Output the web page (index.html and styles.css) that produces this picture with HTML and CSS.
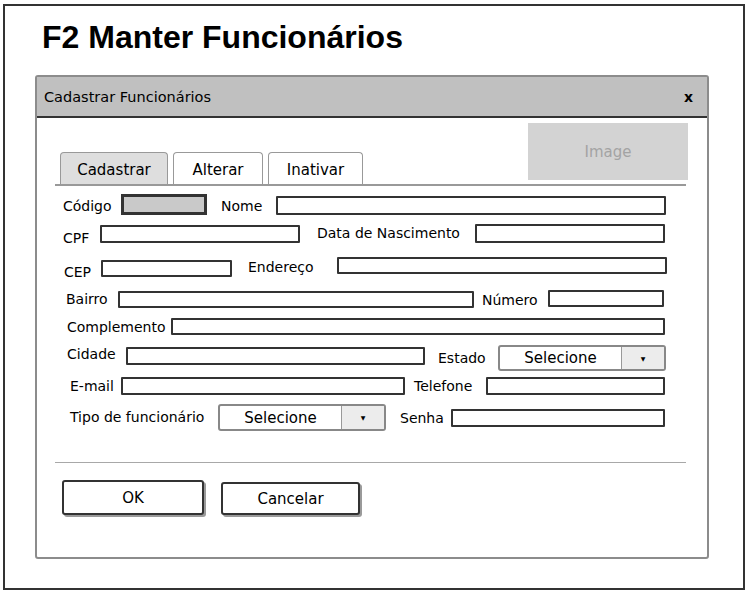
FILE: index.html
```html
<!DOCTYPE html>
<html lang="pt">
<head>
<meta charset="utf-8">
<title>F2 Manter Funcionários</title>
<link rel="stylesheet" href="styles.css">
</head>
<body>
<div class="frame">
  <h1 class="title">F2 Manter Funcionários</h1>
  <div class="dialog">
    <div class="dlg-head">
      <span class="dlg-title">Cadastrar Funcionários</span>
      <span class="dlg-close">x</span>
    </div>
    <div class="top">
      <div class="image">Image</div>
      <div class="tabs">
        <div class="tab tab-cad active">Cadastrar</div>
        <div class="tab tab-alt">Alterar</div>
        <div class="tab tab-ina">Inativar</div>
      </div>
    </div>
    <div class="form">
      <div class="row r1">
        <span class="lbl l-codigo">Código</span>
        <span class="codigo"></span>
        <span class="lbl l-nome">Nome</span>
        <span class="inp i-nome"></span>
      </div>
      <div class="row r2">
        <span class="lbl l-cpf">CPF</span>
        <span class="inp i-cpf"></span>
        <span class="lbl l-nasc">Data de Nascimento</span>
        <span class="inp i-nasc"></span>
      </div>
      <div class="row r3">
        <span class="lbl l-cep">CEP</span>
        <span class="inp i-cep"></span>
        <span class="lbl l-end">Endereço</span>
        <span class="inp i-end"></span>
      </div>
      <div class="row r4">
        <span class="lbl l-bairro">Bairro</span>
        <span class="inp i-bairro"></span>
        <span class="lbl l-num">Número</span>
        <span class="inp i-num"></span>
      </div>
      <div class="row r5">
        <span class="lbl l-comp">Complemento</span>
        <span class="inp i-comp"></span>
      </div>
      <div class="row r6">
        <span class="lbl l-cidade">Cidade</span>
        <span class="inp i-cidade"></span>
        <span class="lbl l-estado">Estado</span>
        <span class="sel sel-estado"><span class="sel-text">Selecione</span><span class="sel-arrow">▼</span></span>
      </div>
      <div class="row r7">
        <span class="lbl l-email">E-mail</span>
        <span class="inp i-email"></span>
        <span class="lbl l-tel">Telefone</span>
        <span class="inp i-tel"></span>
      </div>
      <div class="row r8">
        <span class="lbl l-tipo">Tipo de funcionário</span>
        <span class="sel sel-tipo"><span class="sel-text">Selecione</span><span class="sel-arrow">▼</span></span>
        <span class="lbl l-senha">Senha</span>
        <span class="inp i-senha"></span>
      </div>
    </div>
    <div class="sep"></div>
    <div class="buttons">
      <div class="btn btn-ok">OK</div>
      <div class="btn btn-cancel">Cancelar</div>
    </div>
  </div>
</div>
</body>
</html>
```
FILE: styles.css
```css
* { box-sizing: border-box; }
body {
  margin: 0;
  background: #fff;
  color: #000;
  font-family: "DejaVu Sans", "Liberation Sans", sans-serif;
  font-size: 14px;
}
.frame {
  margin: 4px 0 0 3px;
  width: 742px;
  height: 586px;
  border: 2px solid #333;
}
.title {
  margin: 11px 0 0 37px;
  height: 40px;
  font: bold 32px/40px "Liberation Sans", sans-serif;
  color: #000;
}
.dialog {
  margin: 18px 0 0 30px;
  width: 674px;
  height: 484px;
  border: 2px solid #8c8c8c;
  border-radius: 3px;
}
.dlg-head {
  height: 41px;
  background: #c0c0c0;
  border-bottom: 2px solid #333;
  display: flex;
  align-items: center;
  justify-content: space-between;
  padding: 0 14px 0 7px;
  font-size: 14.5px;
}
.dlg-close {
  font-weight: bold;
  font-size: 14px;
}
.top {
  display: grid;
  height: 68px;
  padding: 5px 21px 0 18px;
}
.image, .tabs { grid-area: 1 / 1; }
.image {
  justify-self: end;
  align-self: start;
  margin-right: -2px;
  width: 160px;
  height: 57px;
  background: #d3d3d3;
  color: #a3a3a3;
  font-size: 15px;
  display: flex;
  align-items: center;
  justify-content: center;
}
.tabs {
  align-self: end;
  display: flex;
  gap: 5px;
  padding-left: 5px;
  border-bottom: 2px solid #999;
}
.tab {
  height: 32px;
  border: 1px solid #999;
  border-bottom: none;
  border-radius: 4px 4px 0 0;
  background: #fff;
  display: flex;
  align-items: center;
  justify-content: center;
  font-size: 15px;
  padding-top: 2px;
}
.tab.active { background: #dedede; }
.tab-cad { width: 108px; }
.tab-alt { width: 90px; }
.tab-ina { width: 95px; }

.form { display: flex; flex-direction: column; }
.row { display: flex; align-items: flex-start; }
.lbl {
  flex: none;
  line-height: 18px;
  font-size: 14px;
  white-space: nowrap;
}
.inp {
  flex: none;
  display: block;
  height: 18px;
  border: 2px solid #333;
  border-radius: 1px;
  background: #fff;
}
.codigo {
  flex: none;
  width: 86px;
  height: 21px;
  border: 3px solid #333;
  background: #c9c9c9;
}
.sel {
  flex: none;
  display: flex;
  width: 168px;
  height: 26px;
  border: 2px solid #888;
  border-radius: 3px;
  background: #fff;
  overflow: hidden;
}
.sel-text {
  flex: 1;
  display: flex;
  align-items: center;
  justify-content: center;
  font-size: 15px;
}
.sel-arrow {
  width: 43px;
  background: #ececec;
  border-left: 1px solid #999;
  display: flex;
  align-items: center;
  justify-content: center;
  font-size: 6px;
}

.r1 { margin-top: 8px; height: 22px; padding-left: 26px; }
.l-codigo { width: 58px; margin-top: 3px; }
.l-nome { width: 55px; margin: 3px 0 0 14px; }
.i-nome { width: 390px; height: 19px; margin-top: 2px; }

.r2 { margin-top: 8px; height: 20px; padding-left: 26px; }
.l-cpf { width: 37px; margin-top: 5px; }
.i-cpf { width: 200px; margin-top: 1px; }
.l-nasc { width: 158px; margin-left: 17px; }
.i-nasc { width: 190px; height: 19px; }

.r3 { margin-top: 13px; height: 21px; padding-left: 27px; }
.l-cep { width: 37px; margin-top: 6px; }
.i-cep { width: 131px; height: 17px; margin-top: 3px; }
.l-end { width: 89px; margin: 1px 0 0 16px; }
.i-end { width: 330px; height: 17px; }

.r4 { margin-top: 12px; height: 18px; padding-left: 29px; }
.l-bairro { width: 52px; }
.i-bairro { width: 356px; height: 17px; margin-top: 1px; }
.l-num { width: 66px; margin: 1px 0 0 8px; }
.i-num { width: 116px; height: 17px; }

.r5 { margin-top: 10px; height: 17px; padding-left: 30px; }
.l-comp { width: 104px; }
.i-comp { width: 494px; height: 17px; }

.r6 { margin-top: 10px; height: 26px; padding-left: 30px; }
.l-cidade { width: 59px; }
.i-cidade { width: 299px; margin-top: 2px; }
.l-estado { width: 60px; margin: 4px 0 0 13px; }

.r7 { margin-top: 6px; height: 18px; padding-left: 33px; }
.l-email { width: 51px; }
.i-email { width: 284px; }
.l-tel { width: 72px; margin-left: 9px; }
.i-tel { width: 179px; }

.r8 { margin-top: 9px; height: 27px; padding-left: 33px; }
.l-tipo { width: 148px; margin-top: 4px; }
.sel-tipo { height: 27px; }
.l-senha { width: 51px; margin: 5px 0 0 14px; }
.i-senha { width: 214px; margin-top: 5px; }

.sep {
  margin: 31px 21px 0 18px;
  border-top: 1px solid #a8a8a8;
}
.buttons {
  display: flex;
  align-items: flex-start;
  margin-top: 17px;
  padding-left: 25px;
}
.btn {
  display: flex;
  align-items: center;
  justify-content: center;
  border: 2px solid #333;
  border-radius: 3px;
  box-shadow: 2px 2px 0 #9a9a9a;
  background: #fff;
  font-size: 15px;
}
.btn-ok { width: 142px; height: 35px; }
.btn-cancel { width: 139px; height: 33px; margin: 2px 0 0 17px; }
```
